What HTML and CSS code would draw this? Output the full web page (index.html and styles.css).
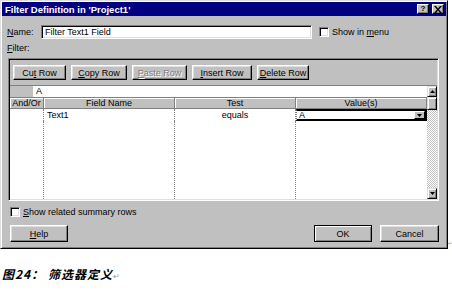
FILE: index.html
```html
<!DOCTYPE html>
<html lang="en">
<head>
  <meta charset="UTF-8">
  <title>Filter Definition</title>
  <link rel="stylesheet" href="styles.css">
</head>
<body>
  <div class="figure">
    <div class="dialog">
      <div class="titlebar">
        <span class="title">Filter Definition in 'Project1'</span>
        <div class="caps">
          <span class="cap-btn">?</span>
          <span class="cap-btn close">
            <svg width="8" height="7" viewBox="0 0 8 7"><path d="M0 0h2l2 2.5 2-2.5h2l-3 3.5 3 3.5h-2l-2-2.5-2 2.5h-2l3-3.5z" fill="#000"/></svg>
          </span>
        </div>
      </div>

      <div class="body">
        <div class="name-row">
          <span class="name-label"><u>N</u>ame:</span>
          <div class="textbox">Filter Text1 Field</div>
          <span class="check-label"><span class="checkbox"></span><span>Show in <u>m</u>enu</span></span>
        </div>

        <div class="filter-label"><u>F</u>ilter:</div>

        <div class="frame">
          <div class="toolbar">
            <span class="btn w-cut"><span>Cu<u>t</u> Row</span></span>
            <span class="btn w-copy"><span><u>C</u>opy Row</span></span>
            <span class="btn w-paste disabled"><span><u>P</u>aste Row</span></span>
            <span class="btn w-insert"><span><u>I</u>nsert Row</span></span>
            <span class="btn w-delete"><span><u>D</u>elete Row</span></span>
          </div>

          <div class="grid-wrap">
            <div class="grid">
              <div class="edit-row">
                <div class="selector"></div>
                <div class="edit">A</div>
              </div>
              <div class="head-row">
                <div class="hcell c-andor">And/Or</div>
                <div class="hcell c-field">Field Name</div>
                <div class="hcell c-test">Test</div>
                <div class="hcell c-value">Value(s)</div>
              </div>
              <div class="data-row">
                <div class="cell c-andor"></div>
                <div class="cell c-field">Text1</div>
                <div class="cell c-test center">equals</div>
                <div class="cell c-value current">
                  <span class="cur-text">A</span>
                  <span class="drop">
                    <svg width="5" height="3" viewBox="0 0 5 3"><path d="M0 0h5l-2.5 3z" fill="#000"/></svg>
                  </span>
                </div>
              </div>
              <div class="rest">
                <div class="cell c-andor"></div>
                <div class="cell c-field"></div>
                <div class="cell c-test"></div>
                <div class="cell c-value"></div>
              </div>
            </div>

            <div class="vscroll">
              <span class="sbtn">
                <svg width="5" height="3" viewBox="0 0 5 3"><path d="M0 3h5l-2.5-3z" fill="#000"/></svg>
              </span>
              <span class="sbtn thumb"></span>
              <span class="track"></span>
              <span class="sbtn">
                <svg width="5" height="3" viewBox="0 0 5 3"><path d="M0 0h5l-2.5 3z" fill="#000"/></svg>
              </span>
            </div>
          </div>
        </div>

        <div class="summary-row">
          <span class="checkbox"></span><span><u>S</u>how related summary rows</span>
        </div>

        <div class="button-row">
          <span class="btn w-dlg"><span><u>H</u>elp</span></span>
          <div class="right-buttons">
            <span class="btn w-dlg default">OK</span>
            <span class="btn w-dlg cancel">Cancel</span>
          </div>
        </div>
      </div>
    </div>
    <span class="mark">↵</span>
  </div>

  <p class="caption">图24： 筛选器定义<span class="ret">↵</span></p>
</body>
</html>
```

FILE: styles.css
```css
/* ----------------------------------
   Page
----------------------------------- */
* {
  box-sizing: border-box;
}
body {
  margin: 0;
  background: #fff;
  font-family: "Liberation Sans", Arial, sans-serif;
  font-size: 9px;
  color: #000;
}
u {
  text-decoration: underline;
  text-underline-offset: 1px;
}

.figure {
  display: flex;
  align-items: flex-end;
}
.mark {
  font-size: 5px;
  line-height: 5px;
  color: #999;
  margin-bottom: 3px;
}

/* ----------------------------------
   Dialog window
----------------------------------- */
.dialog {
  width: 448px;
  height: 249px;
  background: #c0c0c0;
  border: 1px solid;
  border-color: #dfdfdf #000 #000 #dfdfdf;
  box-shadow: inset 1px 1px #fff, inset -1px -1px #808080;
  padding: 1px;
  display: flex;
  flex-direction: column;
}
.titlebar {
  height: 14px;
  background: #000080;
  color: #fff;
  display: flex;
  align-items: center;
  justify-content: space-between;
  padding: 0 2px 0 3px;
}
.title {
  font-weight: bold;
  font-size: 9.5px;
}
.caps {
  display: flex;
  gap: 3px;
}
.cap-btn {
  width: 12px;
  height: 10px;
  background: #c0c0c0;
  border: 1px solid;
  border-color: #fff #000 #000 #fff;
  box-shadow: inset -1px -1px #808080;
  color: #000;
  font-weight: bold;
  font-size: 8px;
  line-height: 8px;
  display: flex;
  align-items: center;
  justify-content: center;
}

.body {
  flex: 1;
  display: flex;
  flex-direction: column;
  padding: 0 7px 0 5px;
}

/* ----------------------------------
   Name row
----------------------------------- */
.name-row {
  margin-top: 9px;
  height: 14px;
  display: flex;
  align-items: center;
}
.name-label {
  width: 34px;
}
.textbox {
  width: 271px;
  height: 14px;
  background: #fff;
  border: 1px solid;
  border-color: #808080 #fff #fff #808080;
  box-shadow: inset 1px 1px #000, inset -1px -1px #dfdfdf;
  padding: 0 3px;
  line-height: 12px;
}
.check-label {
  margin-left: 7px;
  display: flex;
  align-items: center;
  gap: 3px;
}
.checkbox {
  width: 10px;
  height: 10px;
  background: #fff;
  border: 1px solid;
  border-color: #808080 #fff #fff #808080;
  box-shadow: inset 1px 1px #000, inset -1px -1px #dfdfdf;
}

.filter-label {
  margin-top: 4px;
  line-height: 11px;
}

/* ----------------------------------
   Sunken frame: toolbar + grid
----------------------------------- */
.frame {
  margin: 4px 0 0 1px;
  height: 143px;
  border: 1px solid;
  border-color: #808080 #fff #fff #808080;
  box-shadow: inset 1px 1px #000, inset -1px -1px #dfdfdf;
  padding: 1px;
  display: flex;
  flex-direction: column;
}
.toolbar {
  height: 26px;
  display: flex;
  align-items: flex-start;
  gap: 5px;
  padding: 5px 0 0 3px;
  border-bottom: 1px solid #808080;
}

.btn {
  height: 15px;
  background: #c0c0c0;
  border: 1px solid;
  border-color: #fff #000 #000 #fff;
  box-shadow: inset -1px -1px #808080, inset 1px 1px #dfdfdf;
  display: flex;
  align-items: center;
  justify-content: center;
  white-space: nowrap;
}
.btn.disabled {
  color: #808080;
  text-shadow: 1px 1px #fff;
}
.w-cut { width: 53px; }
.w-copy { width: 56px; }
.w-paste { width: 55px; }
.w-insert { width: 60px; }
.w-delete { width: 52px; }

.grid-wrap {
  flex: 1;
  display: flex;
}
.grid {
  width: 417px;
  display: flex;
  flex-direction: column;
  background: #fff;
}
.edit-row {
  height: 11px;
  display: flex;
}
.selector {
  width: 23px;
  background: #c0c0c0;
}
.edit {
  flex: 1;
  padding-left: 3px;
  line-height: 11px;
}
.head-row {
  height: 12px;
  display: flex;
  border-top: 1px solid #808080;
}
.hcell {
  background: #c0c0c0;
  border-right: 1px solid #808080;
  border-bottom: 1px solid #808080;
  box-shadow: inset 1px 1px #fff;
  text-align: center;
  line-height: 11px;
}
.c-andor { width: 34px; }
.c-field { width: 131px; }
.c-test { width: 121px; }
.c-value { width: 131px; }

.data-row {
  height: 12px;
  display: flex;
}
.cell {
  border-right: 1px dotted #808080;
  line-height: 12px;
  padding-left: 3px;
}
.cell.center {
  text-align: center;
  padding-left: 0;
}
.cell.current {
  border: 2px solid #000;
  border-left: 1px dotted #808080;
  display: flex;
  align-items: center;
  justify-content: space-between;
  padding: 0 0 0 2px;
  line-height: 8px;
}
.drop {
  width: 11px;
  height: 8px;
  background: #c0c0c0;
  border: 1px solid;
  border-color: #fff #000 #000 #fff;
  display: flex;
  align-items: center;
  justify-content: center;
}
.rest {
  flex: 1;
  display: flex;
}
.rest .c-value {
  border-right: none;
}

.vscroll {
  width: 12px;
  display: flex;
  flex-direction: column;
}
.sbtn {
  height: 11px;
  background: #c0c0c0;
  border: 1px solid;
  border-color: #dfdfdf #000 #000 #dfdfdf;
  box-shadow: inset 1px 1px #fff, inset -1px -1px #808080;
  display: flex;
  align-items: center;
  justify-content: center;
}
.sbtn.thumb {
  height: 13px;
}
.track {
  flex: 1;
  background-color: #fff;
  background-image: conic-gradient(#c0c0c0 25%, #fff 0 50%, #c0c0c0 0 75%, #fff 0);
  background-size: 2px 2px;
}

/* ----------------------------------
   Bottom rows
----------------------------------- */
.summary-row {
  margin: 6px 0 0 3px;
  height: 10px;
  display: flex;
  align-items: center;
  gap: 3px;
}
.button-row {
  margin: 8px 0 0 3px;
  display: flex;
  justify-content: space-between;
}
.right-buttons {
  display: flex;
  gap: 8px;
}
.w-dlg { width: 58px; height: 17px; }
.btn.cancel { width: 59px; }
.btn.default {
  border-color: #000;
  box-shadow: inset 1px 1px #fff, inset -1px -1px #808080;
}

/* ----------------------------------
   Caption under the figure
----------------------------------- */
.caption {
  margin: 18px 0 0 2px;
  font-family: "Noto Sans CJK SC", "Liberation Sans", sans-serif;
  font-size: 12px;
  line-height: 14px;
  font-weight: bold;
  font-style: italic;
  letter-spacing: 1px;
}
.ret {
  font-size: 8px;
  font-weight: normal;
  font-style: normal;
  color: #999;
}
```
